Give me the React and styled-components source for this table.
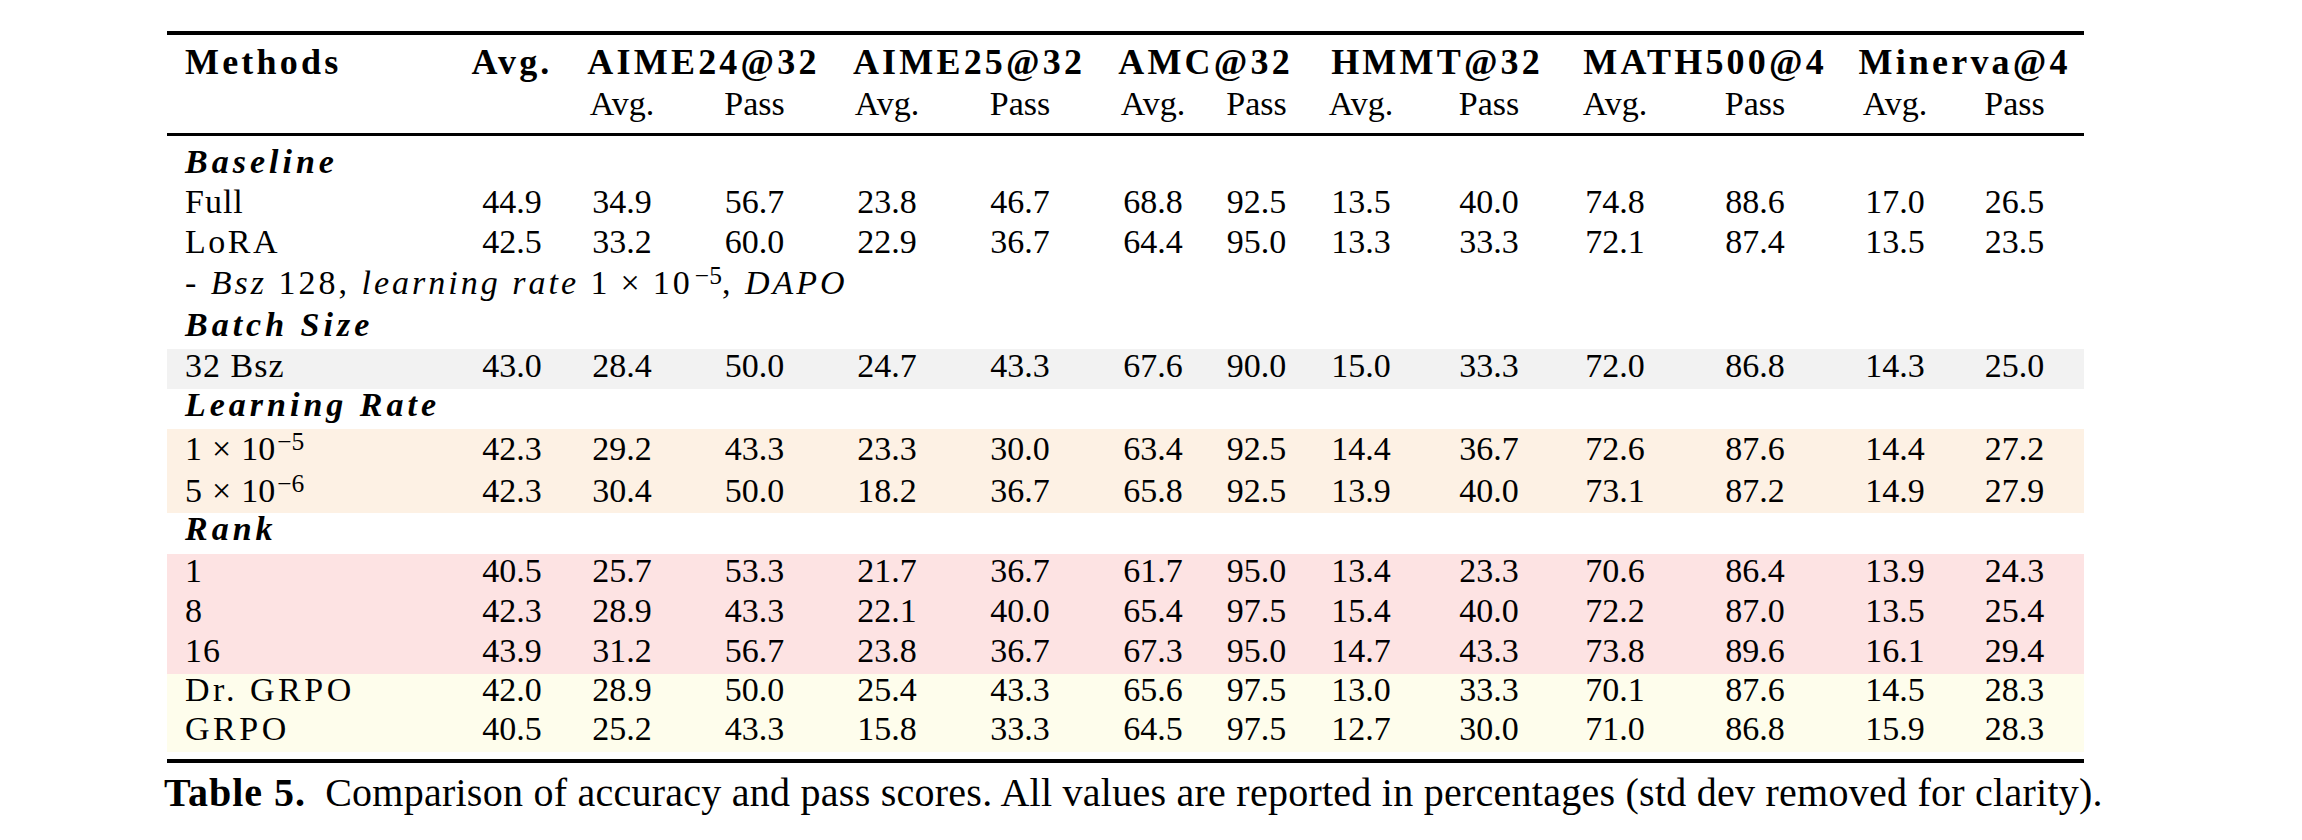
import styled, { createGlobalStyle } from "styled-components";

// Page reset and default font
const GlobalStyle = createGlobalStyle`
  html, body {
    margin: 0;
    padding: 0;
    background: #fff;
  }
  body {
    font-family: "Liberation Serif", "Times New Roman", serif;
    color: #000;
  }
`;

// Outer figure, positioned by its margin
const Figure = styled.div`
  width: 1917px;
  margin: 31px 0 0 167px;
`;

// booktabs style rules
const Rule = styled.div`
  height: ${(p) => p.$h}px;
  background: #000;
  margin-top: ${(p) => p.$mt || 0}px;
`;

const Table = styled.table`
  width: 1917px;
  table-layout: fixed;
  border-collapse: separate;
  border-spacing: 0;
  font-size: 34px;
`;

// one row; the line height and paddings place the baseline
const Row = styled.tr`
  background: ${(p) => p.$bg || "transparent"};

  & > td {
    padding: ${(p) => p.$pt || 0}px 0 ${(p) => p.$pb || 0}px 0;
    line-height: ${(p) => p.$lh}px;
    height: ${(p) => p.$lh}px;
    vertical-align: top;
    white-space: nowrap;
    border-bottom: ${(p) => (p.$rule ? "3px solid #000" : "none")};
  }
`;

const Cell = styled.td`
  text-align: ${(p) => p.$align || "center"};
  padding-left: ${(p) => (p.$align === "left" ? "18px" : "0")} !important;
  letter-spacing: ${(p) => p.$ls || 0}px;
`;

// bold top header text
const HeadText = styled.span`
  font-weight: 700;
  font-size: 36px;
  letter-spacing: 3.2px;
`;

// bold italic section labels
const Section = styled.span`
  font-weight: 700;
  font-style: italic;
  letter-spacing: 4px;
`;

const Note = styled.span`
  letter-spacing: 3px;
`;

const Em = styled.i`
  font-style: italic;
`;

const Sup = styled.sup`
  font-size: 0.75em;
  line-height: 0;
  vertical-align: 0.38em;
  letter-spacing: 0;
  margin-left: 2px;
`;

const Cross = styled.span`
  margin: 0 10px;
`;

const Caption = styled.div`
  margin: 6px 0 0 -3px;
  font-size: 40px;
  line-height: 48px;
  letter-spacing: 0.25px;
  white-space: nowrap;
`;

const Label = styled.b`
  font-weight: 700;
  letter-spacing: 1px;
  margin-right: 19px;
`;

const widths = [286, 118, 102, 163, 102, 164, 102, 105, 104, 152, 100, 180, 100, 139];

const groups = ["AIME24@32", "AIME25@32", "AMC@32", "HMMT@32", "MATH500@4", "Minerva@4"];

const Power = ({ base, exp }) => (
  <span>
    {base}
    <Cross>×</Cross>10
    <Sup>−{exp}</Sup>
  </span>
);

const sections = [
  {
    title: "Baseline",
    head: { pt: 6, lh: 40 },
    rows: [
      { label: "Full", ls: 1, v: ["44.9", "34.9", "56.7", "23.8", "46.7", "68.8", "92.5", "13.5", "40.0", "74.8", "88.6", "17.0", "26.5"] },
      { label: "LoRA", ls: 2.5, v: ["42.5", "33.2", "60.0", "22.9", "36.7", "64.4", "95.0", "13.3", "33.3", "72.1", "87.4", "13.5", "23.5"] },
    ],
    lh: 40,
    pb: 0,
  },
  {
    title: "Batch Size",
    head: { lh: 44, pb: 2 },
    bg: "#f2f2f2",
    rows: [
      { label: "32 Bsz", ls: 1, v: ["43.0", "28.4", "50.0", "24.7", "43.3", "67.6", "90.0", "15.0", "33.3", "72.0", "86.8", "14.3", "25.0"] },
    ],
    lh: 34,
    pb: 6,
  },
  {
    title: "Learning Rate",
    head: { lh: 31, pb: 9 },
    bg: "#fdf1e4",
    rows: [
      { label: <Power base="1" exp="5" />, v: ["42.3", "29.2", "43.3", "23.3", "30.0", "63.4", "92.5", "14.4", "36.7", "72.6", "87.6", "14.4", "27.2"] },
      { label: <Power base="5" exp="6" />, v: ["42.3", "30.4", "50.0", "18.2", "36.7", "65.8", "92.5", "13.9", "40.0", "73.1", "87.2", "14.9", "27.9"] },
    ],
    lh: 40,
    pb: 2,
  },
  {
    title: "Rank",
    head: { lh: 31, pb: 10 },
    bg: "#fde3e3",
    rows: [
      { label: "1", v: ["40.5", "25.7", "53.3", "21.7", "36.7", "61.7", "95.0", "13.4", "23.3", "70.6", "86.4", "13.9", "24.3"] },
      { label: "8", v: ["42.3", "28.9", "43.3", "22.1", "40.0", "65.4", "97.5", "15.4", "40.0", "72.2", "87.0", "13.5", "25.4"] },
      { label: "16", ls: 1, v: ["43.9", "31.2", "56.7", "23.8", "36.7", "67.3", "95.0", "14.7", "43.3", "73.8", "89.6", "16.1", "29.4"] },
    ],
    lh: 33,
    pb: 7,
  },
];

const tail = [
  { label: "Dr. GRPO", ls: 3.5, v: ["42.0", "28.9", "50.0", "25.4", "43.3", "65.6", "97.5", "13.0", "33.3", "70.1", "87.6", "14.5", "28.3"] },
  { label: "GRPO", ls: 3.5, v: ["40.5", "25.2", "43.3", "15.8", "33.3", "64.5", "97.5", "12.7", "30.0", "71.0", "86.8", "15.9", "28.3"] },
];

const DataRow = ({ row, lh, pb, bg }) => (
  <Row $lh={lh} $pb={pb} $bg={bg}>
    <Cell $align="left" $ls={row.ls || 0}>
      {row.label}
    </Cell>
    {row.v.map((x, i) => (
      <Cell key={i}>{x}</Cell>
    ))}
  </Row>
);

const App = () => {
  return (
    <>
      <GlobalStyle />
      <Figure>
        <Rule $h={4} />
        <Table>
          <colgroup>
            {widths.map((w, i) => (
              <col key={i} style={{ width: w }} />
            ))}
          </colgroup>
          <thead>
            <Row $lh={42} $pt={6}>
              <Cell $align="left">
                <HeadText>Methods</HeadText>
              </Cell>
              <Cell>
                <HeadText>Avg.</HeadText>
              </Cell>
              {groups.map((g) => (
                <Cell key={g} colSpan={2}>
                  <HeadText>{g}</HeadText>
                </Cell>
              ))}
            </Row>
            <Row $lh={40} $pb={9} $rule>
              <Cell $align="left" />
              <Cell />
              {groups.map((g) => [
                <Cell key={g + "a"}>Avg.</Cell>,
                <Cell key={g + "p"}>Pass</Cell>,
              ])}
            </Row>
          </thead>
          <tbody>
            {sections.map((s, si) => [
              <Row key={s.title} $lh={s.head.lh} $pt={s.head.pt} $pb={s.head.pb}>
                <Cell $align="left" colSpan={14}>
                  <Section>{s.title}</Section>
                </Cell>
              </Row>,
              ...s.rows.map((r, ri) => (
                <DataRow key={s.title + ri} row={r} lh={s.lh} pb={s.pb} bg={s.bg} />
              )),
              si === 0 ? (
                <Row key="note" $lh={40} $pt={1}>
                  <Cell $align="left" colSpan={14}>
                    <Note>
                      - <Em>Bsz</Em> 128, <Em>learning rate</Em> <Power base="1" exp="5" />, <Em>DAPO</Em>
                    </Note>
                  </Cell>
                </Row>
              ) : null,
            ])}
            {tail.map((r, i) => (
              <DataRow key={"t" + i} row={r} lh={31} pb={8} bg="#fefdec" />
            ))}
          </tbody>
        </Table>
        <Rule $h={4} $mt={7} />
        <Caption>
          <Label>Table 5.</Label>Comparison of accuracy and pass scores. All values are reported in
          percentages (std dev removed for clarity).
        </Caption>
      </Figure>
    </>
  );
};

export default App;
